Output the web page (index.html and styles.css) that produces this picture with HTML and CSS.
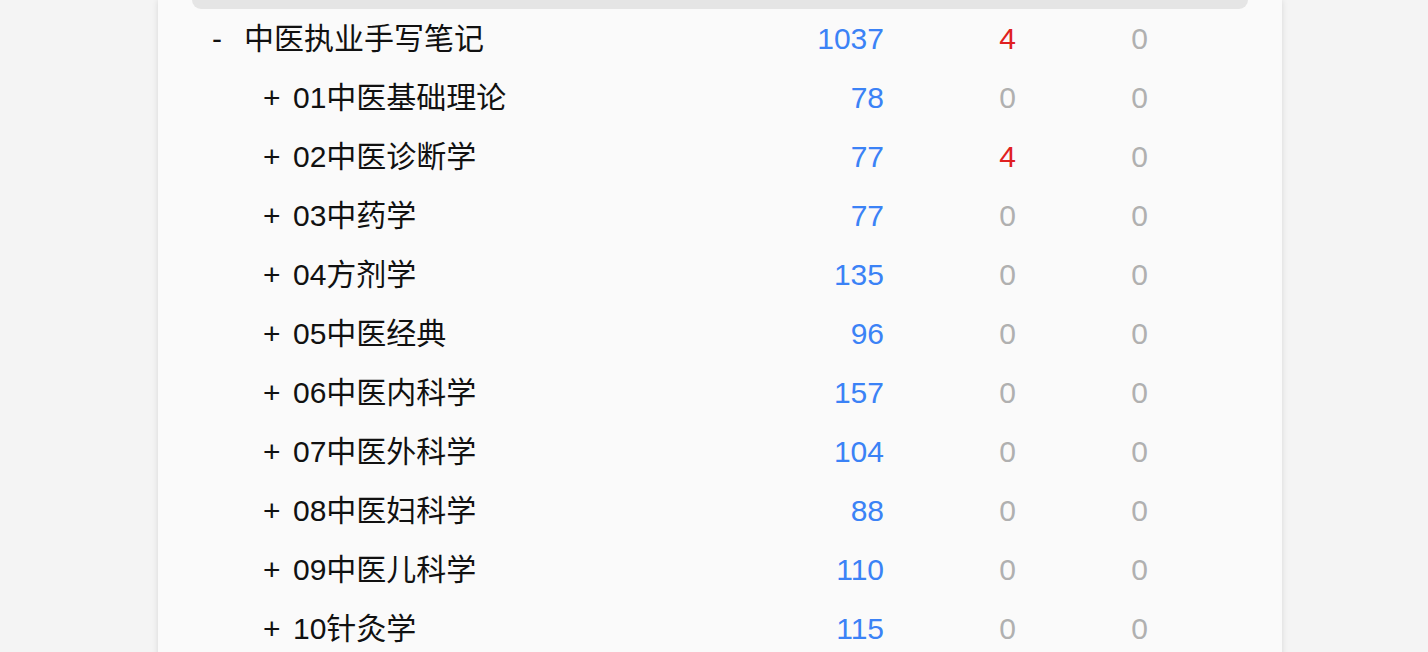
FILE: index.html
```html
<!DOCTYPE html>
<html lang="zh">
<head>
<meta charset="utf-8">
<title>统计</title>
<link rel="stylesheet" href="styles.css">
</head>
<body>
<div class="card">
  <div class="topbar"></div>
  <div class="list">
    <div class="row parent">
      <div class="name"><span class="toggle">-</span><span class="label">中医执业手写笔记</span></div>
      <div class="num blue">1037</div><div class="num red">4</div><div class="num grey">0</div>
    </div>
    <div class="row child">
      <div class="name"><span class="toggle">+</span><span class="label">01中医基础理论</span></div>
      <div class="num blue">78</div><div class="num grey">0</div><div class="num grey">0</div>
    </div>
    <div class="row child">
      <div class="name"><span class="toggle">+</span><span class="label">02中医诊断学</span></div>
      <div class="num blue">77</div><div class="num red">4</div><div class="num grey">0</div>
    </div>
    <div class="row child">
      <div class="name"><span class="toggle">+</span><span class="label">03中药学</span></div>
      <div class="num blue">77</div><div class="num grey">0</div><div class="num grey">0</div>
    </div>
    <div class="row child">
      <div class="name"><span class="toggle">+</span><span class="label">04方剂学</span></div>
      <div class="num blue">135</div><div class="num grey">0</div><div class="num grey">0</div>
    </div>
    <div class="row child">
      <div class="name"><span class="toggle">+</span><span class="label">05中医经典</span></div>
      <div class="num blue">96</div><div class="num grey">0</div><div class="num grey">0</div>
    </div>
    <div class="row child">
      <div class="name"><span class="toggle">+</span><span class="label">06中医内科学</span></div>
      <div class="num blue">157</div><div class="num grey">0</div><div class="num grey">0</div>
    </div>
    <div class="row child">
      <div class="name"><span class="toggle">+</span><span class="label">07中医外科学</span></div>
      <div class="num blue">104</div><div class="num grey">0</div><div class="num grey">0</div>
    </div>
    <div class="row child">
      <div class="name"><span class="toggle">+</span><span class="label">08中医妇科学</span></div>
      <div class="num blue">88</div><div class="num grey">0</div><div class="num grey">0</div>
    </div>
    <div class="row child">
      <div class="name"><span class="toggle">+</span><span class="label">09中医儿科学</span></div>
      <div class="num blue">110</div><div class="num grey">0</div><div class="num grey">0</div>
    </div>
    <div class="row child">
      <div class="name"><span class="toggle">+</span><span class="label">10针灸学</span></div>
      <div class="num blue">115</div><div class="num grey">0</div><div class="num grey">0</div>
    </div>
  </div>
</div>
</body>
</html>
```
FILE: styles.css
```css
html, body {
  margin: 0;
  padding: 0;
  background: #f4f4f4;
  height: 652px;
  overflow: hidden;
}
body {
  font-family: "Liberation Sans", "Noto Sans CJK SC", sans-serif;
  font-size: 30px;
  color: #111;
}
.card {
  margin-left: 158px;
  width: 1124px;
  min-height: 700px;
  background: #fafafa;
  box-shadow: 0 0 6px rgba(0, 0, 0, 0.12);
}
.topbar {
  margin: 0 34px 0 34px;
  height: 9px;
  background: #e5e5e5;
  border-radius: 0 0 22px 22px;
}
.list {
  display: flex;
  flex-direction: column;
}
.row {
  display: grid;
  grid-template-columns: 594px 132px 132px 132px;
  height: 59px;
  align-items: center;
  line-height: 1;
}
.name {
  display: flex;
  align-items: center;
  white-space: nowrap;
}
.parent .name { padding-left: 54px; }
.parent .toggle { width: 32px; }
.child .name { padding-left: 105px; }
.child .toggle { width: 30px; }
.num {
  text-align: right;
}
.blue { color: #3b82f6; }
.red { color: #e02020; }
.grey { color: #b0b0b0; }
```
